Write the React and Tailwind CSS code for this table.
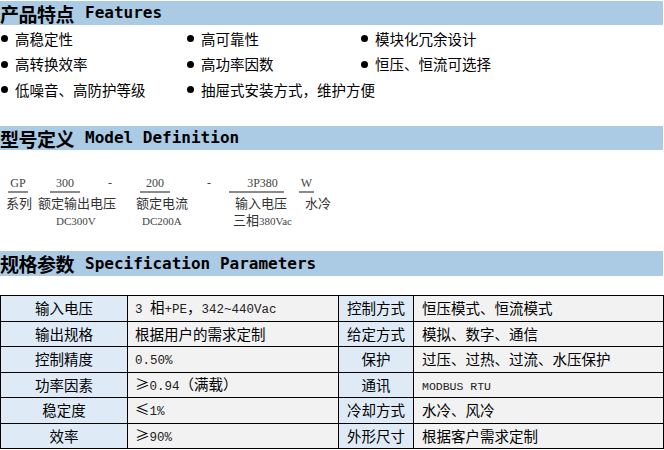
const cjk = { fontFamily: '"Noto Sans CJK SC", "Liberation Sans", sans-serif' }
const mono = { fontFamily: '"Liberation Mono", "Noto Sans CJK SC", monospace' }
const serif = { fontFamily: '"Liberation Serif", "Noto Sans CJK SC", serif' }
const head = { fontFamily: '"DejaVu Sans Mono", "Noto Sans CJK SC", monospace' }

function SectionBar({ zh, en, className = '' }) {
  return (
    <div className={`w-[663px] bg-[#abcbe5] flex items-center text-black font-bold whitespace-nowrap ${className}`}>
      <span className="text-[19px] leading-none tracking-[-0.5px]" style={cjk}>{zh}</span>
      <span className="text-[16px] leading-none ml-[11px]" style={head}>{en}</span>
    </div>
  )
}

function Bullet({ children }) {
  return (
    <div className="flex items-center whitespace-nowrap">
      <span className="w-[7px] h-[7px] rounded-full bg-black mr-[7px] shrink-0" />
      <span className="text-[14.5px] text-black leading-none" style={cjk}>{children}</span>
    </div>
  )
}

const features = [
  ['高稳定性', '高可靠性', '模块化冗余设计'],
  ['高转换效率', '高功率因数', '恒压、恒流可选择'],
  ['低噪音、高防护等级', '抽屉式安装方式，维护方便', null]
]

// Z = full-width / CJK segment, L = latin segment
const Z = ({ children }) => <span className="text-[14.5px]" style={cjk}>{children}</span>
const L = ({ children }) => <span className="text-[12.5px] text-[#222]" style={mono}>{children}</span>

const specs = [
  ['输入电压', <><L>3 </L><Z>相</Z><L>+PE</L><Z>，</Z><L>342~440Vac</L></>, '控制方式', '恒压模式、恒流模式'],
  ['输出规格', '根据用户的需求定制', '给定方式', '模拟、数字、通信'],
  ['控制精度', <L>0.50%</L>, '保护', '过压、过热、过流、水压保护'],
  ['功率因素', <><Z>≥</Z><L>0.94</L><Z>（满载）</Z></>, '通讯', <span className="text-[11.5px] text-[#222]" style={mono}>MODBUS RTU</span>],
  ['稳定度', <><Z>≤</Z><L>1%</L></>, '冷却方式', '水冷、风冷'],
  ['效率', <><Z>≥</Z><L>90%</L></>, '外形尺寸', '根据客户需求定制']
]

function Code({ children, className }) {
  return (
    <div className={`text-center text-[12px] leading-[14px] text-[#444] border-b-2 border-[#8a8a8a] pb-[1px] ${className}`} style={serif}>
      {children}
    </div>
  )
}

function ModelDefinition() {
  return (
    <div className="h-[101px] pt-[26px] text-[#333]">
      {/* code row */}
      <div className="flex items-end h-[17px]">
        <Code className="ml-[8px] w-[20px]">GP</Code>
        <Code className="ml-[22px] w-[30px]">300</Code>
        <span className="ml-[28px] text-[12px] leading-[14px] mb-[3px] text-[#444]" style={serif}>-</span>
        <Code className="ml-[28px] w-[30px]">200</Code>
        <span className="ml-[37px] text-[12px] leading-[14px] mb-[3px] text-[#444]" style={serif}>-</span>
        <Code className="ml-[18px] w-[55px] pl-[12px]">3P380</Code>
        <Code className="ml-[15px] w-[15px]">W</Code>
      </div>
      {/* label row */}
      <div className="flex text-[13px] leading-[16px] mt-[2px] whitespace-nowrap" style={cjk}>
        <span className="ml-[6px] w-[26px]">系列</span>
        <span className="ml-[6px] w-[78px]">额定输出电压</span>
        <span className="ml-[20px] w-[52px]">额定电流</span>
        <span className="ml-[47px] w-[52px]">输入电压</span>
        <span className="ml-[18px]">水冷</span>
      </div>
      {/* value row */}
      <div className="flex items-baseline text-[11px] leading-[15px] mt-[1px] whitespace-nowrap text-[#444]" style={serif}>
        <span className="ml-[56px] w-[40px]">DC300V</span>
        <span className="ml-[46px] w-[40px]">DC200A</span>
        <span className="ml-[51px]">
          <span className="text-[13px] text-[#333]" style={cjk}>三相</span>380Vac
        </span>
      </div>
    </div>
  )
}

function SpecTable() {
  return (
    <table className="border-collapse w-[663px] table-fixed">
      <colgroup>
        <col className="w-[127px]" />
        <col className="w-[211px]" />
        <col className="w-[75px]" />
        <col className="w-[250px]" />
      </colgroup>
      <tbody>
        {specs.map((r, i) => (
          <tr key={i} className="h-[25.5px]">
            <td className="border border-black bg-[#deeaf6] text-center text-[14.5px] leading-none p-0" style={cjk}>{r[0]}</td>
            <td className="border border-black bg-[#f2f2f2] pl-[7px] p-0 text-[14.5px] leading-none whitespace-nowrap" style={cjk}>{r[1]}</td>
            <td className="border border-black bg-[#deeaf6] text-center text-[14.5px] leading-none p-0 whitespace-nowrap" style={cjk}>{r[2]}</td>
            <td className="border border-black bg-[#f2f2f2] pl-[8px] p-0 text-[14.5px] leading-none whitespace-nowrap" style={cjk}>{r[3]}</td>
          </tr>
        ))}
      </tbody>
    </table>
  )
}

export default function App() {
  return (
    <div className="w-[664px] h-[450px] overflow-hidden bg-white">
      <SectionBar zh="产品特点" en="Features" className="mt-[1px] h-[24px]" />

      {/* Features list */}
      <div className="flex flex-col pt-[1px]">
        {features.map((row, i) => (
          <div key={i} className="flex h-[25.5px] items-center">
            <div className="w-[187px] pl-[1px]">{row[0] && <Bullet>{row[0]}</Bullet>}</div>
            <div className="w-[174px]">{row[1] && <Bullet>{row[1]}</Bullet>}</div>
            <div className="flex-1">{row[2] && <Bullet>{row[2]}</Bullet>}</div>
          </div>
        ))}
      </div>

      <SectionBar zh="型号定义" en="Model Definition" className="mt-[23.5px] h-[24px]" />
      <ModelDefinition />

      <SectionBar zh="规格参数" en="Specification Parameters" className="h-[25px]" />
      <div className="h-[19px]" />
      <SpecTable />
    </div>
  )
}
